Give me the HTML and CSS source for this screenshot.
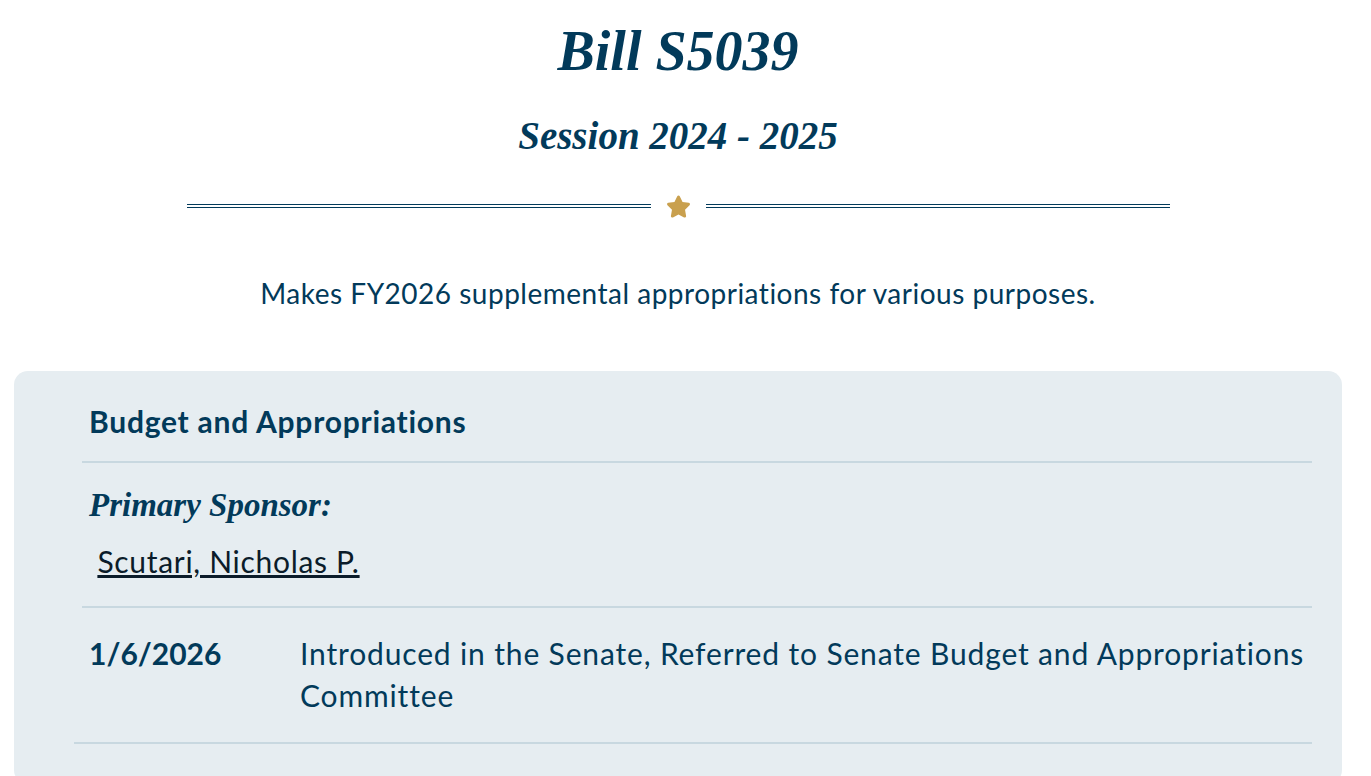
FILE: index.html
```html
<!doctype html>
<html>
<head>
  <link rel="stylesheet" href="styles.css">
</head>
<body>
  <div class="page">
    <h1 class="bill-title">Bill S5039</h1>
    <h2 class="session">Session 2024 - 2025</h2>

    <div class="divider">
      <div class="rule"></div>
      <svg class="star" viewBox="0 0 576 512"><path d="M316.9 18C311.6 7 300.4 0 288.1 0s-23.4 7-28.8 18L195 150.3 51.4 171.5c-12 1.8-22 10.2-25.7 21.7s-.7 24.2 7.9 32.7L137.8 329 113.2 474.7c-2 12 3 24.2 12.9 31.3s23 8 33.8 2.3l128.3-68.5 128.3 68.5c10.8 5.7 23.9 4.9 33.8-2.3s14.9-19.3 12.9-31.3L438.5 329 542.7 225.9c8.6-8.5 11.7-21.2 7.9-32.7s-13.7-19.9-25.7-21.7L381.2 150.3 316.9 18z"/></svg>
      <div class="rule"></div>
    </div>

    <p class="synopsis">Makes FY2026 supplemental appropriations for various purposes.</p>

    <div class="card">
      <div class="section">
        <div class="committee">Budget and Appropriations</div>
      </div>
      <div class="section">
        <div class="label">Primary Sponsor:</div>
        <div class="sponsors">&nbsp;<a href="#">Scutari, Nicholas P.</a></div>
      </div>
      <div class="history">
        <div class="history-row">
          <div class="date">1/6/2026</div>
          <div class="action">Introduced in the Senate, Referred to Senate Budget and Appropriations Committee</div>
        </div>
      </div>
    </div>
  </div>
</body>
</html>
```

FILE: styles.css
```css
body{
  margin: 0;
  background: #ffffff;
  color: #023a5a;
  font-family: Lato, "Noto Sans", sans-serif;
  font-variant-ligatures: none;
}
.page{
  width: 1356px;
}
.bill-title{
  margin: 18px 0 0;
  font-family: "Liberation Serif", serif;
  font-style: italic;
  font-weight: bold;
  font-size: 56px;
  line-height: 67px;
  text-align: center;
}
.session{
  margin: 27px 0 0;
  font-family: "Liberation Serif", serif;
  font-style: italic;
  font-weight: bold;
  font-size: 39px;
  line-height: 47px;
  text-align: center;
}
.divider{
  display: flex;
  align-items: center;
  justify-content: center;
  gap: 15px;
  margin-top: 35px;
  height: 24px;
}
.rule{
  width: 464px;
  height: 2px;
  border-top: 1px solid #023a5a;
  border-bottom: 1px solid #023a5a;
}
.star{
  width: 25px;
  height: 23px;
  fill: #c9a04e;
}
.synopsis{
  margin: 54px 0 0;
  font-size: 28px;
  line-height: 42px;
  letter-spacing: 0.5px;
  text-align: center;
}
.card{
  margin: 57px 14px 0;
  padding: 29px 30px 40px 68px;
  background: #e6edf1;
  border-radius: 14px;
}
.section{
  padding: 0 0 19px 7px;
  border-bottom: 2px solid #c8d8e0;
}
.section + .section{
  padding-top: 22px;
  padding-bottom: 24px;
}
.committee{
  font-weight: bold;
  font-size: 30px;
  line-height: 42px;
  letter-spacing: 0.75px;
}
.label{
  font-family: "Liberation Serif", serif;
  font-style: italic;
  font-weight: bold;
  font-size: 33px;
  line-height: 40px;
}
.sponsors{
  margin-top: 15px;
  font-size: 30px;
  line-height: 42px;
  letter-spacing: 0.7px;
}
.sponsors a{
  color: #0b1c2a;
}
.history{
  margin-left: -8px;
}
.history-row{
  display: grid;
  grid-template-columns: 211px 1fr;
  padding: 24px 0 26px 15px;
  border-bottom: 2px solid #c8d8e0;
  font-size: 30px;
  line-height: 42px;
  letter-spacing: 0.85px;
}
.date{
  font-weight: bold;
  letter-spacing: 0;
}
```
